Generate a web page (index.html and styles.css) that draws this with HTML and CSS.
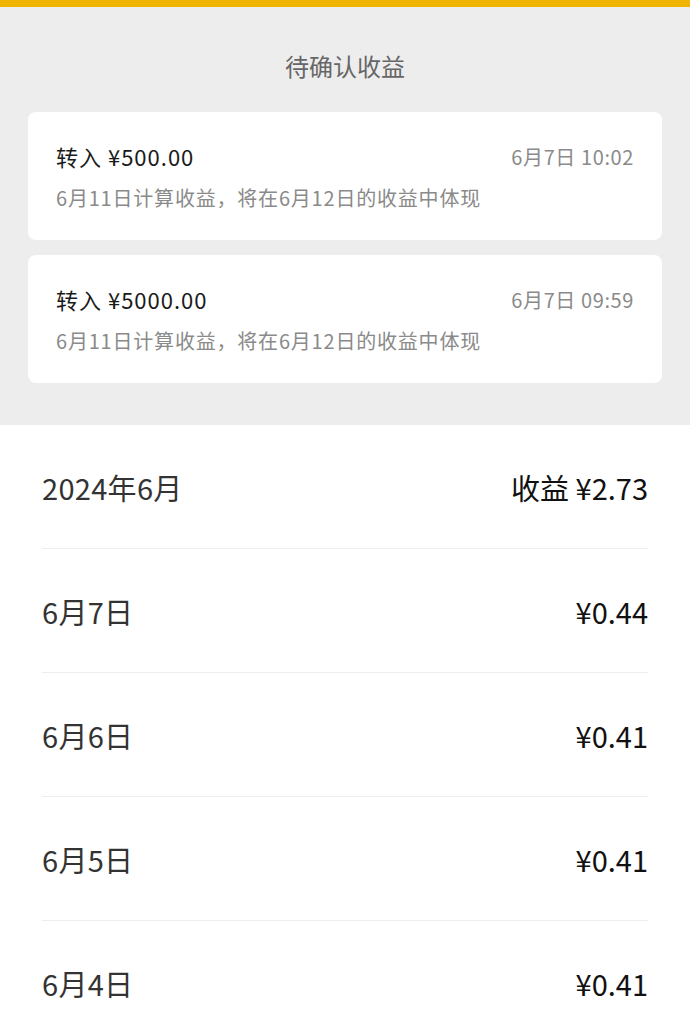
FILE: index.html
```html
<!DOCTYPE html>
<html>

<head>
    <meta charset="utf-8">
    <title>收益明细</title>
    <link rel="stylesheet" href="styles.css">
</head>

<body>
    <div class="topbar"></div>

    <div class="pending">
        <h2 class="pending-title">待确认收益</h2>

        <div class="card">
            <div class="card-head">
                <span class="card-amount">转入 ¥500.00</span>
                <span class="card-time">6月7日 10:02</span>
            </div>
            <div class="card-note">6月11日计算收益，将在6月12日的收益中体现</div>
        </div>

        <div class="card">
            <div class="card-head">
                <span class="card-amount">转入 ¥5000.00</span>
                <span class="card-time">6月7日 09:59</span>
            </div>
            <div class="card-note">6月11日计算收益，将在6月12日的收益中体现</div>
        </div>
    </div>

    <div class="list">
        <div class="row month">
            <span class="row-date">2024年6月</span>
            <span class="row-money">收益 ¥2.73</span>
        </div>
        <div class="row">
            <span class="row-date">6月7日</span>
            <span class="row-money">¥0.44</span>
        </div>
        <div class="row">
            <span class="row-date">6月6日</span>
            <span class="row-money">¥0.41</span>
        </div>
        <div class="row">
            <span class="row-date">6月5日</span>
            <span class="row-money">¥0.41</span>
        </div>
        <div class="row">
            <span class="row-date">6月4日</span>
            <span class="row-money">¥0.41</span>
        </div>
    </div>
</body>

</html>
```

FILE: styles.css
```css
body {
    margin: 0;
    background-color: #ffffff;
    font-family: "Noto Sans CJK SC", "Noto Sans", sans-serif;
}

.topbar {
    height: 7px;
    background-color: #f0b400;
}

.pending {
    background-color: #ededed;
    padding: 43px 28px 42px 28px;
}

.pending-title {
    margin: 0 0 30px 0;
    text-align: center;
    font-size: 24px;
    font-weight: normal;
    line-height: 32px;
    color: #666666;
}

.card {
    background-color: #ffffff;
    border-radius: 8px;
    padding: 28px 28px;
    margin-bottom: 15px;
}

.card:last-child {
    margin-bottom: 0;
}

.card-head {
    display: flex;
    justify-content: space-between;
    align-items: center;
    height: 32px;
}

.card-amount {
    font-size: 22px;
    letter-spacing: 1px;
    color: #1a1a1a;
}

.card-time {
    font-size: 20px;
    letter-spacing: 0.6px;
    color: #8a8a8a;
}

.card-note {
    margin-top: 12px;
    font-size: 20px;
    letter-spacing: 0.8px;
    line-height: 28px;
    color: #8a8a8a;
}

.list {
    padding: 0 42px;
}

.row {
    display: flex;
    justify-content: space-between;
    align-items: center;
    height: 123px;
    border-bottom: 1px solid #eeeeee;
}

.row:last-child {
    border-bottom: none;
}

.row-date {
    font-size: 29px;
    letter-spacing: 0.3px;
    color: #333333;
}

.row-money {
    font-size: 29px;
    color: #111111;
}
```
